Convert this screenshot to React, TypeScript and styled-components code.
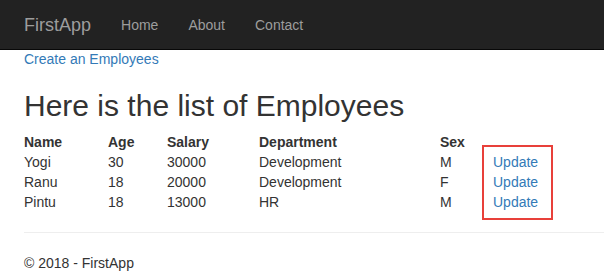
import React from 'react'
import styled, { createGlobalStyle } from 'styled-components'

const GlobalStyle = createGlobalStyle`
  html, body {
    margin: 0;
    padding: 0;
    background: #fff;
  }
  body {
    font-family: 'Liberation Sans', Arial, Helvetica, sans-serif;
    font-size: 14px;
    line-height: 20px;
    color: #333;
    overflow: hidden;
  }
`

const Navbar = styled.nav`
  display: flex;
  align-items: center;
  height: 49px;
  padding-left: 9px;
  background: #222;
  border-bottom: 1px solid #080808;
  margin-bottom: -1px;
`

const Brand = styled.a`
  padding: 15px;
  font-size: 18px;
  line-height: 20px;
  color: #9d9d9d;
  text-decoration: none;
`

const NavLink = styled.a`
  padding: 15px;
  font-size: 14px;
  line-height: 20px;
  color: #9d9d9d;
  text-decoration: none;
`

const Body = styled.main`
  padding-left: 24px;
`

const Link = styled.a`
  color: #337ab7;
  text-decoration: none;
`

const Heading = styled.h2`
  margin: 20px 0 10px;
  font-size: 30px;
  font-weight: 500;
  line-height: 33px;
  color: #333;
`

const TableWrap = styled.div`
  position: relative;
`

const Table = styled.table`
  border-collapse: collapse;
  border-spacing: 0;
`

const Th = styled.th<{ $w: number }>`
  width: ${(p) => p.$w}px;
  padding: 0;
  text-align: left;
  font-weight: 700;
`

const Td = styled.td`
  padding: 0;
`

const Highlight = styled.div`
  position: absolute;
  left: 458px;
  top: 13px;
  width: 67px;
  height: 71px;
  border: 2px solid #e8403a;
`

const Rule = styled.hr`
  margin: 20px 0;
  border: 0;
  border-top: 1px solid #eee;
`

const Footer = styled.footer`
  p {
    margin: 0 0 10px;
  }
`

const employees = [
  { name: 'Yogi', age: 30, salary: 30000, department: 'Development', sex: 'M' },
  { name: 'Ranu', age: 18, salary: 20000, department: 'Development', sex: 'F' },
  { name: 'Pintu', age: 18, salary: 13000, department: 'HR', sex: 'M' },
]

export default function App() {
  return (
    <>
      <GlobalStyle />
      <Navbar>
        <Brand href='#'>FirstApp</Brand>
        <NavLink href='#'>Home</NavLink>
        <NavLink href='#'>About</NavLink>
        <NavLink href='#'>Contact</NavLink>
      </Navbar>
      <Body>
        <Link href='#'>Create an Employees</Link>
        <Heading>Here is the list of Employees</Heading>
        <TableWrap>
          <Table>
            <thead>
              <tr>
                <Th $w={84}>Name</Th>
                <Th $w={59}>Age</Th>
                <Th $w={92}>Salary</Th>
                <Th $w={181}>Department</Th>
                <Th $w={53}>Sex</Th>
                <Th $w={60}></Th>
              </tr>
            </thead>
            <tbody>
              {employees.map((e) => (
                <tr key={e.name}>
                  <Td>{e.name}</Td>
                  <Td>{e.age}</Td>
                  <Td>{e.salary}</Td>
                  <Td>{e.department}</Td>
                  <Td>{e.sex}</Td>
                  <Td>
                    <Link href='#'>Update</Link>
                  </Td>
                </tr>
              ))}
            </tbody>
          </Table>
          <Highlight />
        </TableWrap>
        <Rule />
        <Footer>
          <p>© 2018 - FirstApp</p>
        </Footer>
      </Body>
    </>
  )
}
